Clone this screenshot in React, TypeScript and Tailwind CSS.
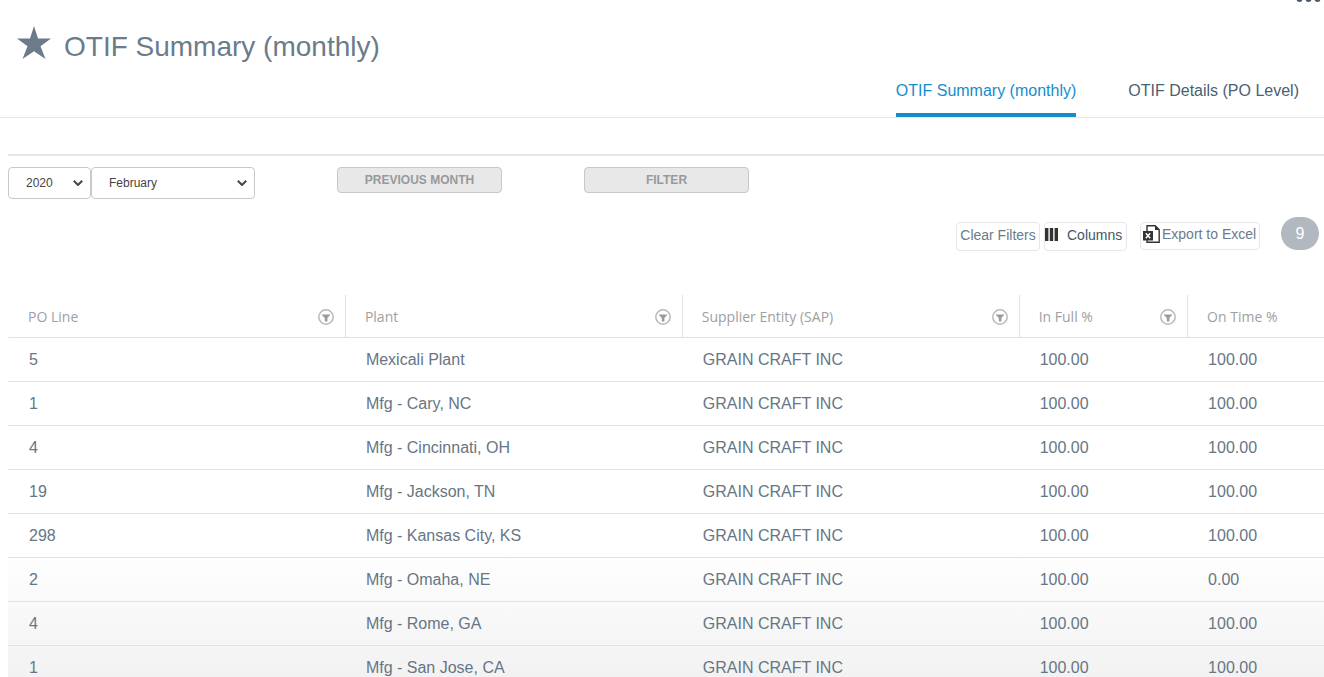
import { useState } from "react";

type OtifRow = {
  poLine: string;
  plant: string;
  supplier: string;
  inFull: string;
  onTime: string;
};

type SelectBoxProps = {
  label: string;
  value: string;
  options: string[];
  className: string;
  onChange: (value: string) => void;
};

const rows: OtifRow[] = [
  { poLine: "5", plant: "Mexicali Plant", supplier: "GRAIN CRAFT INC", inFull: "100.00", onTime: "100.00" },
  { poLine: "1", plant: "Mfg - Cary, NC", supplier: "GRAIN CRAFT INC", inFull: "100.00", onTime: "100.00" },
  { poLine: "4", plant: "Mfg - Cincinnati, OH", supplier: "GRAIN CRAFT INC", inFull: "100.00", onTime: "100.00" },
  { poLine: "19", plant: "Mfg - Jackson, TN", supplier: "GRAIN CRAFT INC", inFull: "100.00", onTime: "100.00" },
  { poLine: "298", plant: "Mfg - Kansas City, KS", supplier: "GRAIN CRAFT INC", inFull: "100.00", onTime: "100.00" },
  { poLine: "2", plant: "Mfg - Omaha, NE", supplier: "GRAIN CRAFT INC", inFull: "100.00", onTime: "0.00" },
  { poLine: "4", plant: "Mfg - Rome, GA", supplier: "GRAIN CRAFT INC", inFull: "100.00", onTime: "100.00" },
  { poLine: "1", plant: "Mfg - San Jose, CA", supplier: "GRAIN CRAFT INC", inFull: "100.00", onTime: "100.00" },
];

const columns = [
  { label: "PO Line", width: "w-[25.6%]", filter: true },
  { label: "Plant", width: "w-[25.6%]", filter: true },
  { label: "Supplier Entity (SAP)", width: "w-[25.6%]", filter: true },
  { label: "In Full %", width: "w-[12.8%]", filter: true },
  { label: "On Time %", width: "w-[10.4%]", filter: false },
];

const years = ["2019", "2020", "2021"];

const months = [
  "January", "February", "March", "April", "May", "June",
  "July", "August", "September", "October", "November", "December",
];

const cellClass = "border-b border-[#e2e2e2] pl-[21px]";

function StarIcon() {
  return (
    <svg width="34" height="33" viewBox="0 0 34 33" fill="#6c7b8a" aria-hidden="true">
      <path d="M17 0l4 12.6h13L23.5 20.3 28.5 33 17 25.2 5.5 33l5-12.7L0 12.6h13z" />
    </svg>
  );
}

function ColumnsIcon() {
  return (
    <svg width="13" height="13" viewBox="0 0 13 13" fill="#333" aria-hidden="true">
      <path d="M0 0h3.4v13H0zM4.8 0h3.4v13H4.8zM9.6 0H13v13H9.6z" />
    </svg>
  );
}

function ExcelIcon() {
  return (
    <svg width="17" height="18" viewBox="0 0 17 18" fill="none" aria-hidden="true">
      <path d="M4 6V.8h8.2l4 4v12.4H4V15" stroke="#333" strokeWidth="1.4" />
      <path d="M12 .5V5h4.5z" fill="#333" />
      <path d="M0 6h10v9.5H0z" fill="#333" />
      <path d="M2.8 8.2l4.4 5M7.2 8.2l-4.4 5" stroke="#fff" strokeWidth="1.5" />
    </svg>
  );
}

function FilterIcon() {
  return (
    <svg width="16" height="16" viewBox="0 0 16 16" fill="none" aria-hidden="true">
      <circle cx="8" cy="8" r="7.2" stroke="#b8b8b8" strokeWidth="1.5" />
      <path d="M3.5 5.5h9L9.4 9v3.5H6.8V9z" fill="#9a9a9a" />
    </svg>
  );
}

function SelectBox({ label, value, options, className, onChange }: SelectBoxProps) {
  return (
    <div className={`relative ${className}`}>
      <select
        aria-label={label}
        value={value}
        onChange={(event) => onChange(event.target.value)}
        className="h-8 w-full appearance-none rounded border border-[#c8c8c8] bg-white pr-5 pl-[17px] text-xs text-[#444]"
      >
        {options.map((option) => (
          <option key={option}>{option}</option>
        ))}
      </select>
      <svg
        width="10"
        height="6"
        viewBox="0 0 10 6"
        fill="none"
        aria-hidden="true"
        className="pointer-events-none absolute top-[13px] right-2"
      >
        <path d="M.8.8L5 5 9.2.8" stroke="#444" strokeWidth="2" />
      </svg>
    </div>
  );
}

export default function App() {
  const [year, setYear] = useState("2020");
  const [month, setMonth] = useState("February");

  return (
    <div className="flex h-screen flex-col overflow-hidden bg-white font-['Liberation_Sans',Arial,sans-serif] text-[#667685]">
      <header className="border-b border-[#e6e8ea]">
        <div className="flex justify-end pr-[3px]">
          <button type="button" aria-label="More options">
            <svg width="25" height="2" viewBox="0 0 25 2" fill="#4a5866" aria-hidden="true">
              <circle cx="3.5" cy="-1" r="3" />
              <circle cx="12.5" cy="-1" r="3" />
              <circle cx="21.5" cy="-1" r="3" />
            </svg>
          </button>
        </div>
        <div className="flex items-start gap-[13px] pt-6 pl-[17px]">
          <StarIcon />
          <h1 className="pt-[5px] text-[28px] leading-8 text-[#6c7b8a]">OTIF Summary (monthly)</h1>
        </div>
        <nav className="flex justify-end gap-[52px] pt-[18px] pr-[25px]">
          <a href="#summary" aria-current="page" className="border-b-4 border-[#148dcd] pb-3 text-base leading-5 text-[#148dcd]">
            OTIF Summary (monthly)
          </a>
          <a href="#details" className="text-base leading-5 text-[#4a5f70]">
            OTIF Details (PO Level)
          </a>
        </nav>
      </header>

      <main className="flex min-h-0 flex-1 flex-col pt-9 pl-2">
        <div className="flex items-start border-t-2 border-[#e4e8ec] pt-[11px]">
          <SelectBox label="Year" value={year} options={years} className="w-[83px]" onChange={setYear} />
          <SelectBox label="Month" value={month} options={months} className="w-[164px]" onChange={setMonth} />
          <div className="flex gap-[82px] pl-[82px]">
            <button type="button" className="h-[26px] w-[165px] rounded border border-[#c8c8c8] bg-[#e8e8e8] text-xs font-bold text-[#999]">
              PREVIOUS MONTH
            </button>
            <button type="button" className="h-[26px] w-[165px] rounded border border-[#c8c8c8] bg-[#e8e8e8] text-xs font-bold text-[#999]">
              FILTER
            </button>
          </div>
        </div>

        <div className="flex items-start justify-end pt-[18px] pr-[5px] text-sm whitespace-nowrap">
          <div className="flex gap-1 pt-[5px]">
            <button type="button" className="h-[29px] w-[84px] rounded-sm border border-[#e4e8ec] pb-1 text-[#6c7b8a]">
              Clear Filters
            </button>
            <button type="button" className="flex h-[29px] w-[83px] items-center gap-[9px] rounded-sm border border-[#e4e8ec] pb-1 text-[#44576a]">
              <ColumnsIcon />
              Columns
            </button>
          </div>
          <div className="pt-[5px] pl-[13px]">
            <button type="button" className="flex h-7 w-[120px] items-center gap-0.5 rounded-sm border border-[#e4e8ec] pb-1 pl-0.5 text-[#6c7b8a]">
              <ExcelIcon />
              Export to Excel
            </button>
          </div>
          <span className="ml-[21px] flex h-[33px] w-[38px] items-center justify-center rounded-full bg-[#b1b8c0] text-base text-white">
            9
          </span>
        </div>

        <div className="mt-11 min-h-0 flex-1 overflow-hidden bg-linear-to-b from-white from-66% to-[#f2f2f2]">
          <table className="w-full table-fixed border-separate border-spacing-0 text-left">
            <thead>
              <tr className="h-[43px]">
                {columns.map((column) => (
                  <th
                    key={column.label}
                    scope="col"
                    className={`${column.width} border-b border-l border-[#e2e2e2] pt-0.5 pr-[11px] pl-[19px] font-['Open_Sans','Noto_Sans',sans-serif] text-sm font-normal text-[#a0a0a0] first:border-l-transparent`}
                  >
                    <div className="flex items-center justify-between whitespace-nowrap">
                      {column.label}
                      {column.filter ? (
                        <button type="button" aria-label={`Filter ${column.label}`}>
                          <FilterIcon />
                        </button>
                      ) : null}
                    </div>
                  </th>
                ))}
              </tr>
            </thead>
            <tbody>
              {rows.map((row) => (
                <tr key={row.plant} className="h-11 text-base">
                  <td className={cellClass}>{row.poLine}</td>
                  <td className={cellClass}>{row.plant}</td>
                  <td className={cellClass}>{row.supplier}</td>
                  <td className={cellClass}>{row.inFull}</td>
                  <td className={cellClass}>{row.onTime}</td>
                </tr>
              ))}
            </tbody>
          </table>
        </div>
      </main>
    </div>
  );
}
